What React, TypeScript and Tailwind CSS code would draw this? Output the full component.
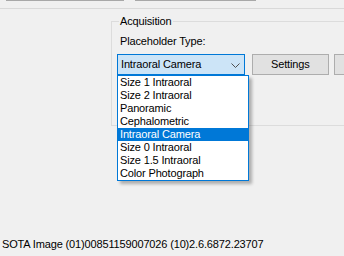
import React from 'react';

const options = [
  'Size 1 Intraoral',
  'Size 2 Intraoral',
  'Panoramic',
  'Cephalometric',
  'Intraoral Camera',
  'Size 0 Intraoral',
  'Size 1.5 Intraoral',
  'Color Photograph',
];

const selected = 'Intraoral Camera';

export default function App() {
  return (
    <div className="w-[344px] h-[256px] bg-[#f0f0f0] overflow-hidden flex flex-col text-[11px] leading-[13px] tracking-[-0.15px] text-black font-['Liberation_Sans',Arial,sans-serif]">
      {/* cut-off controls from the panel above */}
      <div className="flex gap-[11px] pl-[6px] h-px shrink-0">
        <div className="w-[118px] bg-[#a8a8a8]" />
        <div className="w-[121px] bg-[#a8a8a8]" />
      </div>
      <div className="mt-[7px] h-px bg-[#d9d9d9] shrink-0" />

      <fieldset className="ml-[111px] -mr-[10px] mt-[6px] h-[111px] border border-[#dcdcdc] shrink-0 min-w-0">
        <legend className="ml-[7px] px-[1px]">Acquisition</legend>
        <div className="pl-[5px] pt-[7px]">
          <div className="pl-[3px]">Placeholder Type:</div>
          <div className="flex items-start mt-[6px]">
            <div className="relative w-[132px] h-[21px] border border-[#0078d7] bg-[#cce4f7] flex items-center pl-[3px] pr-[4px]">
              <span className="flex-1">{selected}</span>
              <svg width="9" height="5" viewBox="0 0 9 5" className="mt-[1px]">
                <path d="M0.5 0.5 L4.5 4.5 L8.5 0.5" fill="none" stroke="#505050" strokeWidth="1" />
              </svg>
              <ul className="absolute left-[-1px] top-[20px] w-[132px] border border-[#0078d7] bg-white shadow-[3px_3px_3px_rgba(0,0,0,0.28)] z-10">
                {options.map((o) => (
                  <li
                    key={o}
                    className={
                      o === selected
                        ? 'h-[13px] pl-[2px] bg-[#0078d7] text-white'
                        : 'h-[13px] pl-[2px]'
                    }
                  >
                    {o}
                  </li>
                ))}
              </ul>
            </div>
            <button className="ml-[7px] w-[79px] h-[21px] border border-[#adadad] bg-[#e1e1e1] text-center">
              Settings
            </button>
            <button className="ml-[5px] w-[20px] h-[21px] border border-[#adadad] bg-[#e1e1e1]" />
          </div>
        </div>
      </fieldset>

      <div className="flex-1" />
      <div className="pl-[2px] pb-[5px]">SOTA Image (01)00851159007026 (10)2.6.6872.23707</div>
    </div>
  );
}
